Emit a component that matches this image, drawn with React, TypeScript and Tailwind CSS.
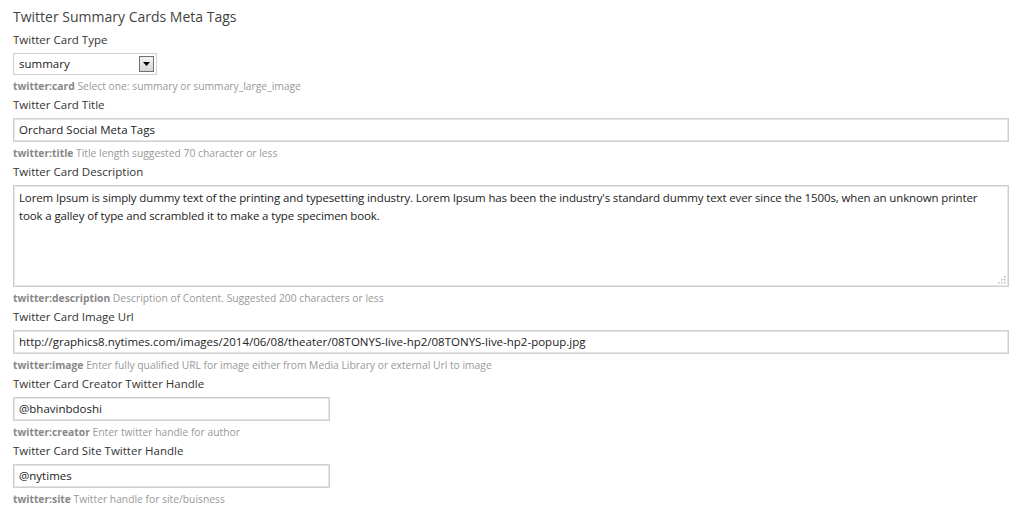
import React from "react";

const font = { fontFamily: '"Open Sans", "Noto Sans", Arial, sans-serif' };

function Label({ children }: { children: React.ReactNode }) {
  return <div className="h-[20px] leading-[20px] text-[11.5px] text-[#333]">{children}</div>;
}

function Help({ tag, children }: { tag: string; children: React.ReactNode }) {
  return (
    <div className="h-[18px] leading-[18px] text-[10.3px] text-[#999] mt-[2px]">
      <span className="font-bold text-[#888]">{tag}</span> {children}
    </div>
  );
}

function TextInput({ value, width }: { value: string; width: string }) {
  return (
    <div
      className={`${width} h-[24px] mt-[3px] border border-[#cfcfcf] shadow-[inset_0_0_0_1px_#e6e6e6] bg-white px-[5px] flex items-center text-[11.5px] text-[#222] whitespace-nowrap overflow-hidden`}
    >
      {value}
    </div>
  );
}

export default function App() {
  return (
    <div className="w-[1024px] h-[518px] bg-white overflow-hidden pl-[13px] pt-[6px]" style={font}>
      <div className="h-[22px] leading-[22px] text-[14px] text-[#444]">Twitter Summary Cards Meta Tags</div>
      <div className="mt-[2px]">
        <Label>Twitter Card Type</Label>
      </div>
      <div className="w-[144px] h-[22px] mt-[3px] border border-[#cfcfcf] bg-white flex items-center justify-between pl-[5px] pr-[2px]">
        <span className="text-[11.5px] text-[#222]">summary</span>
        <div className="w-[15px] h-[16px] border border-[#707070] bg-gradient-to-b from-[#f4f4f4] to-[#d6d6d6] flex items-center justify-center">
          <svg width="7" height="4" viewBox="0 0 7 4">
            <path d="M0 0 L7 0 L3.5 4 Z" fill="#000" />
          </svg>
        </div>
      </div>
      <Help tag="twitter:card">Select one: summary or summary_large_image</Help>
      <Label>Twitter Card Title</Label>
      <TextInput value="Orchard Social Meta Tags" width="w-[996px]" />
      <Help tag="twitter:title">Title length suggested 70 character or less</Help>
      <Label>Twitter Card Description</Label>
      <div className="relative w-[996px] h-[102px] mt-[3px] border border-[#cfcfcf] shadow-[inset_0_0_0_1px_#e6e6e6] bg-white px-[5px] pt-[3px] text-[11.5px] leading-[18px] tracking-[-0.13px] text-[#222]">
        <div className="whitespace-nowrap">
          Lorem Ipsum is simply dummy text of the printing and typesetting industry. Lorem Ipsum has been the industry's standard dummy text ever since the 1500s, when an unknown printer
        </div>
        <div className="whitespace-nowrap">took a galley of type and scrambled it to make a type specimen book.</div>
        <svg className="absolute right-[2px] bottom-[2px]" width="8" height="8" viewBox="0 0 8 8">
          <rect x="6" y="0" width="1.5" height="1.5" fill="#bbb" />
          <rect x="3" y="3" width="1.5" height="1.5" fill="#bbb" />
          <rect x="6" y="3" width="1.5" height="1.5" fill="#bbb" />
          <rect x="0" y="6" width="1.5" height="1.5" fill="#bbb" />
          <rect x="3" y="6" width="1.5" height="1.5" fill="#bbb" />
          <rect x="6" y="6" width="1.5" height="1.5" fill="#bbb" />
        </svg>
      </div>
      <Help tag="twitter:description">Description of Content. Suggested 200 characters or less</Help>
      <Label>Twitter Card Image Url</Label>
      <TextInput
        value="http://graphics8.nytimes.com/images/2014/06/08/theater/08TONYS-live-hp2/08TONYS-live-hp2-popup.jpg"
        width="w-[996px]"
      />
      <Help tag="twitter:image">Enter fully qualified URL for image either from Media Library or external Url to image</Help>
      <Label>Twitter Card Creator Twitter Handle</Label>
      <TextInput value="@bhavinbdoshi" width="w-[317px]" />
      <Help tag="twitter:creator">Enter twitter handle for author</Help>
      <Label>Twitter Card Site Twitter Handle</Label>
      <TextInput value="@nytimes" width="w-[317px]" />
      <Help tag="twitter:site">Twitter handle for site/buisness</Help>
    </div>
  );
}
